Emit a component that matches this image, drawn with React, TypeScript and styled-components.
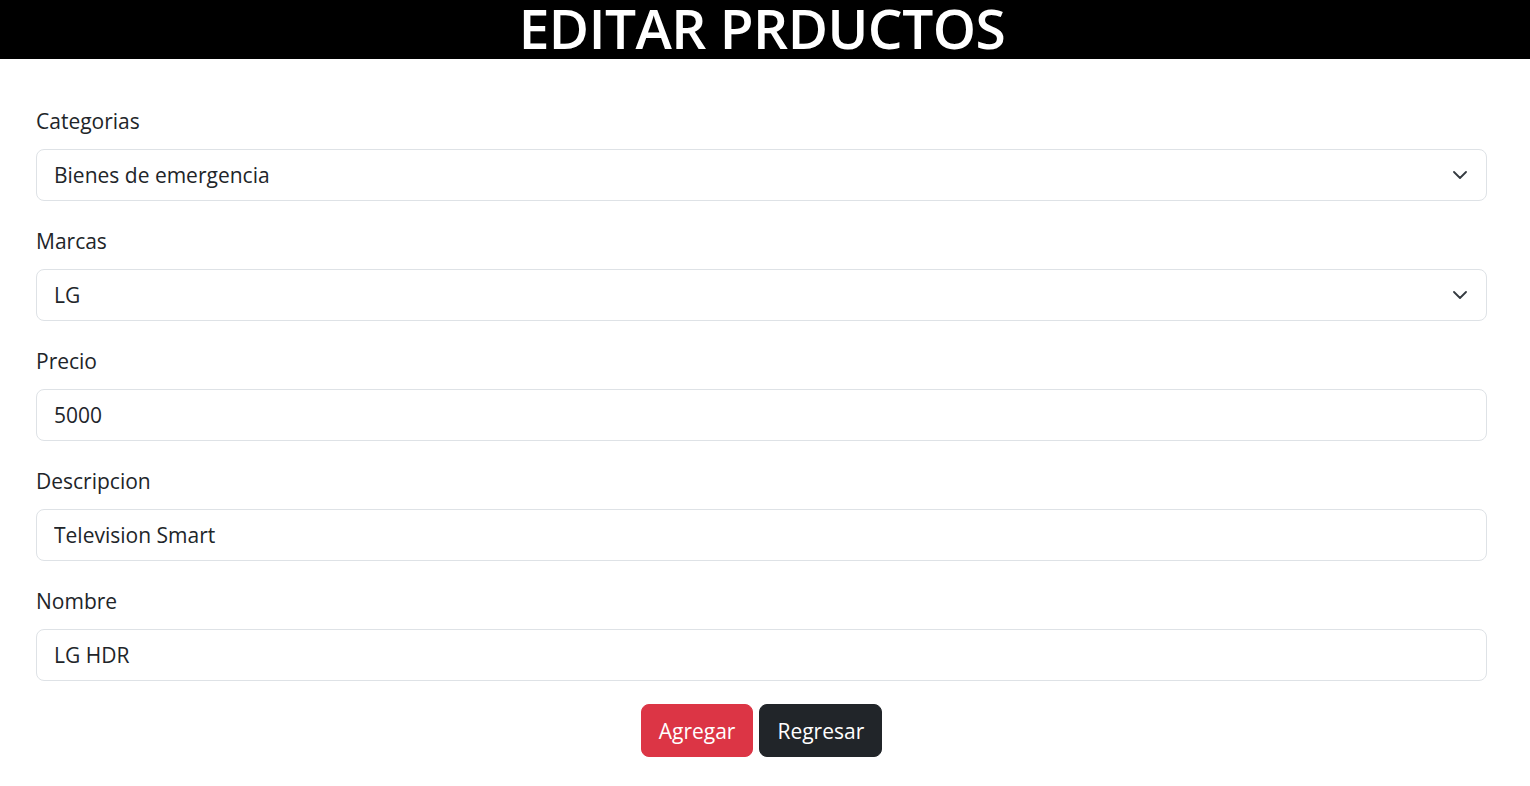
import React from "react";
import styled, { createGlobalStyle } from "styled-components";

const Global = createGlobalStyle`
  html, body { margin: 0; padding: 0; background: #fff; }
  body {
    font-family: "Open Sans", "Noto Sans", "Liberation Sans", sans-serif;
    color: #212529;
  }
  * { box-sizing: border-box; }
`;

const Header = styled.header`
  height: 59px;
  background: #000;
  display: flex;
  align-items: flex-start;
  justify-content: center;
`;

const Title = styled.h1`
  margin: 0;
  color: #fff;
  font-size: 55px;
  font-weight: 600;
  line-height: 55px;
  letter-spacing: -0.5px;
  transform: translateX(-3px);
`;

const Form = styled.form`
  margin: 0 43px 0 36px;
  padding-top: 47px;
  display: flex;
  flex-direction: column;
`;

const Group = styled.div<{ $last?: boolean }>`
  display: flex;
  flex-direction: column;
  margin-bottom: ${(p) => (p.$last ? "23px" : "25px")};
`;

const Label = styled.label`
  font-size: 21px;
  line-height: 30px;
  margin-bottom: 13px;
`;

const fieldBase = `
  width: 100%;
  height: 52px;
  border: 1px solid #dee2e6;
  border-radius: 8px;
  padding: 0 17px;
  font-family: "Open Sans", "Noto Sans", "Liberation Sans", sans-serif;
  font-size: 21px;
  color: #212529;
  background-color: #fff;
  outline: none;
`;

const Input = styled.input`
  ${fieldBase}
`;

const chevron =
  "data:image/svg+xml,%3csvg xmlns='http://www.w3.org/2000/svg' viewBox='0 0 14 8'%3e%3cpath fill='none' stroke='%23343a40' stroke-linecap='round' stroke-linejoin='round' stroke-width='1.8' d='M1 1l6 6 6-6'/%3e%3c/svg%3e";

const Select = styled.select`
  ${fieldBase}
  appearance: none;
  -webkit-appearance: none;
  background-image: url("${chevron}");
  background-repeat: no-repeat;
  background-size: 14px 8px;
  background-position: right 19px center;
`;

const Actions = styled.div`
  display: flex;
  justify-content: center;
  gap: 6px;
`;

const Button = styled.button<{ $variant: "danger" | "dark" }>`
  height: 53px;
  padding: 0 17px;
  border: 1px solid ${(p) => (p.$variant === "danger" ? "#dc3545" : "#212529")};
  background: ${(p) => (p.$variant === "danger" ? "#dc3545" : "#212529")};
  color: #fff;
  border-radius: 8px;
  font-family: "Open Sans", "Noto Sans", "Liberation Sans", sans-serif;
  font-size: 21px;
  cursor: pointer;
`;

export default function App() {
  return (
    <>
      <Global />
      <Header>
        <Title>EDITAR PRDUCTOS</Title>
      </Header>
      <Form onSubmit={(e) => e.preventDefault()}>
        <Group>
          <Label htmlFor="cat">Categorias</Label>
          <Select id="cat" defaultValue="1">
            <option value="1">Bienes de emergencia</option>
          </Select>
        </Group>
        <Group>
          <Label htmlFor="marca">Marcas</Label>
          <Select id="marca" defaultValue="1">
            <option value="1">LG</option>
          </Select>
        </Group>
        <Group>
          <Label htmlFor="precio">Precio</Label>
          <Input id="precio" defaultValue="5000" />
        </Group>
        <Group>
          <Label htmlFor="desc">Descripcion</Label>
          <Input id="desc" defaultValue="Television Smart" />
        </Group>
        <Group $last>
          <Label htmlFor="nombre">Nombre</Label>
          <Input id="nombre" defaultValue="LG HDR" />
        </Group>
        <Actions>
          <Button type="submit" $variant="danger">Agregar</Button>
          <Button type="button" $variant="dark">Regresar</Button>
        </Actions>
      </Form>
    </>
  );
}
